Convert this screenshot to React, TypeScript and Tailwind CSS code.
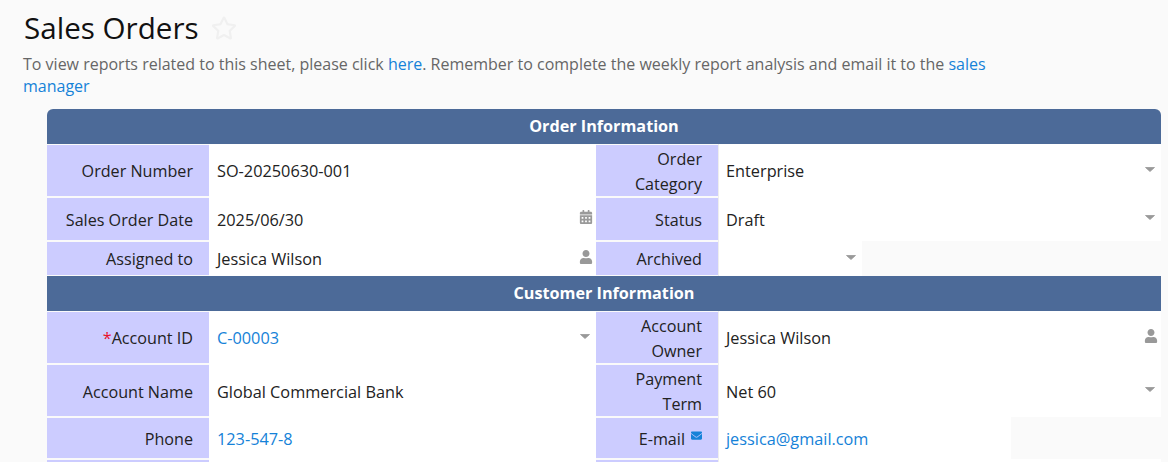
import { FaCalendarAlt, FaEnvelope, FaRegStar, FaUser } from 'react-icons/fa';

const linkText = 'text-[#1582d8]';

function Caret({ lift = 'mb-[5px]' }: { lift?: string }) {
  return (
    <svg width="10" height="5" viewBox="0 0 10 5" className={`mr-[2px] shrink-0 ${lift}`}>
      <path d="M0.5 0.5h9L5 4.5z" fill="#999" stroke="#999" strokeWidth="0.8" strokeLinejoin="round" />
    </svg>
  );
}

function SectionHeader({ title, rounded }: { title: string; rounded?: boolean }) {
  return (
    <div
      className={`flex h-[35px] items-center justify-center bg-[#4c6a98] pb-px text-[16.2px] font-bold text-white ${
        rounded ? 'rounded-t-md' : ''
      }`}
    >
      {title}
    </div>
  );
}

function Label({ children, width, nudge }: { children: React.ReactNode; width: string; nudge?: boolean }) {
  return (
    <div
      className={`my-px flex shrink-0 items-center justify-end bg-[#ccccff] pr-4 pl-2 text-right text-[16.15px] leading-[24.5px] text-[#222] ${
        nudge ? 'pt-[3px]' : 'pt-[2px]'
      } ${width}`}
    >
      {children}
    </div>
  );
}

function Value({
  text,
  link,
  icon,
  width,
  nudge,
}: {
  text?: string;
  link?: boolean;
  icon?: React.ReactNode;
  width: string;
  nudge?: boolean;
}) {
  return (
    <div
      className={`relative flex items-center bg-white pr-[4px] pl-[7px] text-[16.3px] ${
        nudge ? 'pt-[3px]' : 'pt-[2px]'
      } ${width}`}
    >
      <span className={`flex-1 ${link ? linkText : 'text-[#222]'}`}>{text}</span>
      {icon}
    </div>
  );
}

function Row({
  h,
  label1,
  label2,
  v1,
  v2,
  nudge,
}: {
  h: string;
  label1: React.ReactNode;
  label2: React.ReactNode;
  v1: React.ReactNode;
  v2: React.ReactNode;
  nudge?: boolean;
}) {
  return (
    <div className={`flex ${h}`}>
      <Label width="w-[162px]" nudge={nudge}>
        {label1}
      </Label>
      <div className="w-px bg-white" />
      {v1}
      <Label width="w-[122px]">{label2}</Label>
      <div className="w-px bg-[#eeeeee]" />
      {v2}
    </div>
  );
}

export default function App() {
  return (
    <div className="h-[462px] overflow-hidden bg-[#fafafa] font-['Open_Sans',sans-serif] text-[16px]">
      <div className="flex h-[53px] items-center pt-[2px] pl-6">
        <h1 className="text-[29.6px] leading-none text-[#111]">Sales Orders</h1>
        <FaRegStar className="ml-3 text-[#f0f0f0]" size={26} />
      </div>
      <p className="mr-[172px] ml-[23px] text-[16px] leading-[22px] text-[#666]">
        To view reports related to this sheet, please click <span className={linkText}>here</span>. Remember to
        complete the weekly report analysis and email it to the <span className={linkText}>sales manager</span>
      </p>
      <div className="mt-[12px] mr-[7px] ml-[47px]">
        <SectionHeader title="Order Information" rounded />
        <Row
          h="h-[53px]"
          label1="Order Number"
          v1={<Value width="w-[386px]" text="SO-20250630-001" />}
          label2={
            <>
              Order
              <br />
              Category
            </>
          }
          v2={<Value width="flex-1" text="Enterprise" icon={<Caret />} />}
        />
        <Row
          h="h-[44px]"
          label1="Sales Order Date"
          v1={
            <Value
              width="w-[386px]"
              text="2025/06/30"
              icon={<FaCalendarAlt className="-mr-px mb-[6px] text-[#999]" size={14} />}
            />
          }
          label2="Status"
          v2={<Value width="flex-1" text="Draft" icon={<Caret />} />}
        />
        <Row
          h="h-[35px]"
          label1="Assigned to"
          v1={
            <Value
              width="w-[386px]"
              text="Jessica Wilson"
              icon={<FaUser className="-mr-px mb-[5px] text-[#999]" size={14} />}
            />
          }
          label2="Archived"
          v2={
            <div className="flex-1">
              <div className="flex h-full w-[143px] items-center justify-end bg-white pr-[4px]">
                <Caret lift="mb-[2px]" />
              </div>
            </div>
          }
        />
        <SectionHeader title="Customer Information" />
        <Row
          h="h-[53px]"
          label1={
            <>
              <span className="text-[#e8112d]">*</span>Account ID
            </>
          }
          v1={<Value width="w-[386px]" text="C-00003" link icon={<Caret />} />}
          label2={
            <>
              Account
              <br />
              Owner
            </>
          }
          v2={
            <Value
              width="flex-1"
              text="Jessica Wilson"
              icon={<FaUser className="-mr-px mb-[5px] text-[#999]" size={14} />}
            />
          }
        />
        <Row
          h="h-[53px]"
          nudge
          label1="Account Name"
          v1={<Value width="w-[386px]" text="Global Commercial Bank" nudge />}
          label2={
            <>
              Payment
              <br />
              Term
            </>
          }
          v2={<Value width="flex-1" text="Net 60" icon={<Caret />} nudge />}
        />
        <Row
          h="h-[42px]"
          label1="Phone"
          v1={<Value width="w-[386px]" text="123-547-8" link />}
          label2={
            <>
              E-mail
              <FaEnvelope className="mb-[7px] ml-[6px] text-[#1582d8]" size={11} />
            </>
          }
          v2={
            <div className="flex-1">
              <div className="flex h-full w-[292px] items-center bg-white pt-[2px] pl-[7px] text-[16.3px]">
                <span className={linkText}>jessica@gmail.com</span>
              </div>
            </div>
          }
        />
        <Row h="h-[20px]" label1="" v1={<Value width="w-[386px]" />} label2="" v2={<Value width="flex-1" />} />
      </div>
    </div>
  );
}
